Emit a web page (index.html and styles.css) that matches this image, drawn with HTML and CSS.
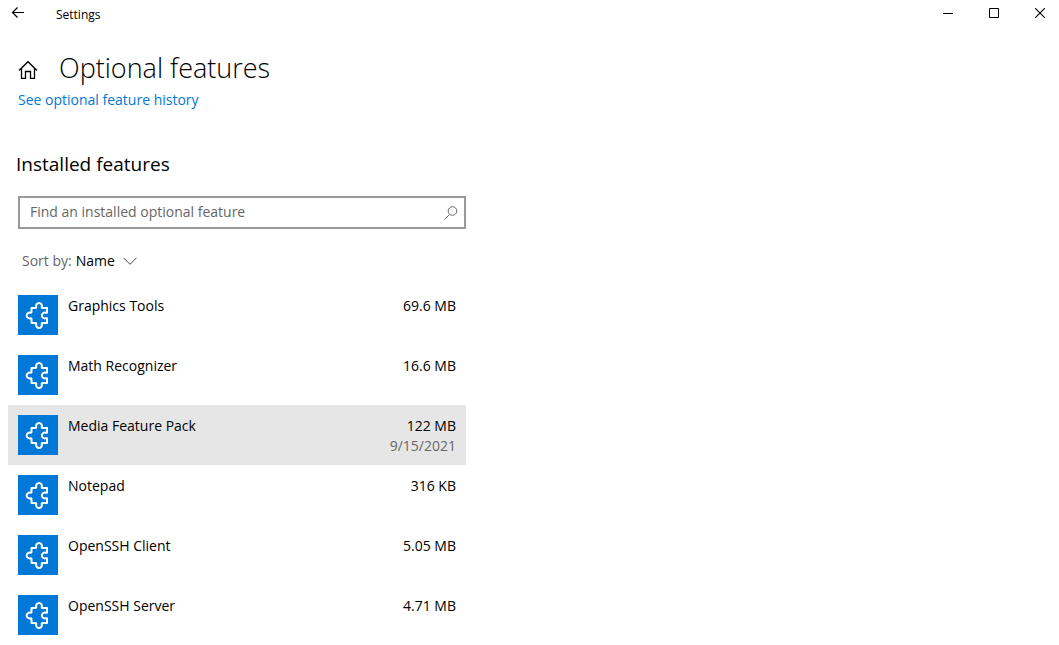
FILE: index.html
```html
<!DOCTYPE html>
<html lang="en">
<head>
<meta charset="utf-8">
<meta name="viewport" content="width=device-width, initial-scale=1">
<title>Settings</title>
<link rel="stylesheet" href="styles.css">
</head>
<body>
<svg class="defs" width="0" height="0" aria-hidden="true">
  <symbol id="puzzle" viewBox="0 0 40 40">
    <path d="M13.5 13H17.500c.8 0 .8-.6.7-1.300a2.900 2.900 0 1 1 5.600 0c-.1.700-.1 1.300.7 1.300H29v4.700h-1.500a2.900 2.900 0 1 0 0 5.600H29V28h-4.500c-.8 0-.8.600-.7 1.300a2.900 2.900 0 1 1-5.600 0c.1-.7.1-1.300-.7-1.300h-4v-4c0-.8-.6-.8-1.200-.7a2.900 2.900 0 1 1 0-5.600c.6.100 1.200.1 1.200-.7Z" fill="none" stroke="#fff" stroke-width="2" stroke-linejoin="round"/>
  </symbol>
</svg>

<header class="titlebar">
  <button class="back" type="button" aria-label="Back">
    <svg width="36" height="26" viewBox="0 0 36 26"><path d="M12.500 12.500H24M17.500 7.500l-5 5 5 5" fill="none" stroke="#000" stroke-width="1.200"/></svg>
  </button>
  <span class="app-name">Settings</span>
  <div class="window-controls">
    <button type="button" aria-label="Minimize"><svg width="10" height="10" viewBox="0 0 10 10"><path d="M0 5.500h10" stroke="#000"/></svg></button>
    <button type="button" aria-label="Maximize"><svg width="10" height="10" viewBox="0 0 10 10"><path d="M.5.5h9v9h-9z" fill="none" stroke="#000"/></svg></button>
    <button type="button" aria-label="Close"><svg width="10" height="10" viewBox="0 0 10 10"><path d="M0 0l10 10M10 0L0 10" stroke="#000" stroke-width="1.100"/></svg></button>
  </div>
</header>

<main class="page">
  <div class="heading">
    <button class="home" type="button" aria-label="Home">
      <svg width="20" height="20" viewBox="0 0 20 20"><path d="M1 10.500L10 1.700l9 8.800M3.500 8.500v9.900h4v-6.900h5v6.900h4V8.500" fill="none" stroke="#000" stroke-width="1.300"/></svg>
    </button>
    <h1>Optional features</h1>
  </div>
  <a class="history" href="#history">See optional feature history</a>

  <h2>Installed features</h2>

  <form class="search" role="search">
    <input type="text" aria-label="Find an installed optional feature" placeholder="Find an installed optional feature">
    <button type="button" aria-label="Search">
      <svg width="16" height="16" viewBox="0 0 16 16"><path d="M6.500 9.500L1.500 14.500" stroke="#666"/><circle cx="9.500" cy="6" r="4.300" fill="none" stroke="#666"/></svg>
    </button>
  </form>

  <div class="sort">
    <label for="sort">Sort by:</label>
    <div class="picker">
      <select id="sort"><option>Name</option></select>
      <svg width="14" height="8" viewBox="0 0 14 8" aria-hidden="true"><path d="M.5.8L7 7.300 13.500.8" fill="none" stroke="#444"/></svg>
    </div>
  </div>

  <ul class="features">
    <li><button type="button"><svg class="tile" aria-hidden="true"><use href="#puzzle"/></svg><span class="name">Graphics Tools</span><span class="meta">69.6 MB</span></button></li>
    <li><button type="button"><svg class="tile" aria-hidden="true"><use href="#puzzle"/></svg><span class="name">Math Recognizer</span><span class="meta">16.6 MB</span></button></li>
    <li><button class="active" type="button"><svg class="tile" aria-hidden="true"><use href="#puzzle"/></svg><span class="name">Media Feature Pack</span><span class="meta">122 MB<span class="date">9/15/2021</span></span></button></li>
    <li><button type="button"><svg class="tile" aria-hidden="true"><use href="#puzzle"/></svg><span class="name">Notepad</span><span class="meta">316 KB</span></button></li>
    <li><button type="button"><svg class="tile" aria-hidden="true"><use href="#puzzle"/></svg><span class="name">OpenSSH Client</span><span class="meta">5.05 MB</span></button></li>
    <li><button type="button"><svg class="tile" aria-hidden="true"><use href="#puzzle"/></svg><span class="name">OpenSSH Server</span><span class="meta">4.71 MB</span></button></li>
  </ul>
</main>
</body>
</html>
```
FILE: styles.css
```css
* {
  box-sizing: border-box;
}

body {
  margin: 0;
  background: #fff;
  color: #000;
  font: 14px/20px "Open Sans", "Noto Sans", sans-serif;
}

button,
input,
select {
  margin: 0;
  padding: 0;
  border: 0;
  background: none;
  color: inherit;
  font: inherit;
}

svg {
  display: block;
}

.defs {
  position: absolute;
}

.titlebar {
  display: flex;
  align-items: flex-start;
  height: 28px;
}

.app-name {
  padding: 5px 0 0 20px;
  font-size: 12px;
}

.window-controls {
  display: flex;
  margin-left: auto;
}

.window-controls button {
  display: grid;
  place-items: center;
  width: 46px;
  height: 26px;
}

.window-controls button:last-child {
  width: 42px;
  padding-left: 4px;
}

.page {
  max-width: 474px;
  padding: 20px 8px 0;
}

.heading {
  display: flex;
  align-items: center;
  gap: 21px;
  height: 40px;
  padding-left: 10px;
}

.home {
  padding-top: 4px;
}

h1 {
  margin: 0;
  font-size: 27px;
  font-weight: 300;
  line-height: 40px;
}

.history {
  display: block;
  width: max-content;
  margin: 2px 0 0 10px;
  color: #0078d7;
  text-decoration: none;
}

h2 {
  margin: 40px 0 0 8px;
  font-size: 19px;
  font-weight: 400;
  line-height: 28px;
}

.search {
  display: flex;
  align-items: center;
  height: 33px;
  margin: 18px 0 0 10px;
  padding: 0 5px 0 10px;
  border: 2px solid #999;
}

.search input {
  flex: 1;
  min-width: 0;
  padding-bottom: 2px;
  outline: 0;
}

.search input::placeholder {
  color: #666;
  opacity: 1;
}

.sort {
  display: flex;
  gap: 4px;
  margin: 22px 0 0 14px;
}

.sort label {
  color: #666;
}

.picker {
  display: grid;
  align-items: center;
}

.picker select,
.picker svg {
  grid-area: 1 / 1;
}

.picker select {
  appearance: none;
  padding-right: 21px;
}

.picker svg {
  justify-self: end;
  pointer-events: none;
}

.features {
  margin: 14px 0 0;
  padding: 0;
  list-style: none;
}

.features button {
  display: flex;
  align-items: flex-start;
  gap: 10px;
  width: 100%;
  min-height: 60px;
  padding: 10px 10px 9px;
  text-align: left;
}

.features .active {
  background: #e6e6e6;
}

.tile {
  flex: none;
  width: 40px;
  height: 40px;
  background: #0078d7;
}

.name {
  flex: 1;
  padding-top: 1px;
}

.meta {
  padding-top: 1px;
  text-align: right;
}

.date {
  display: block;
  color: #666;
}
```
